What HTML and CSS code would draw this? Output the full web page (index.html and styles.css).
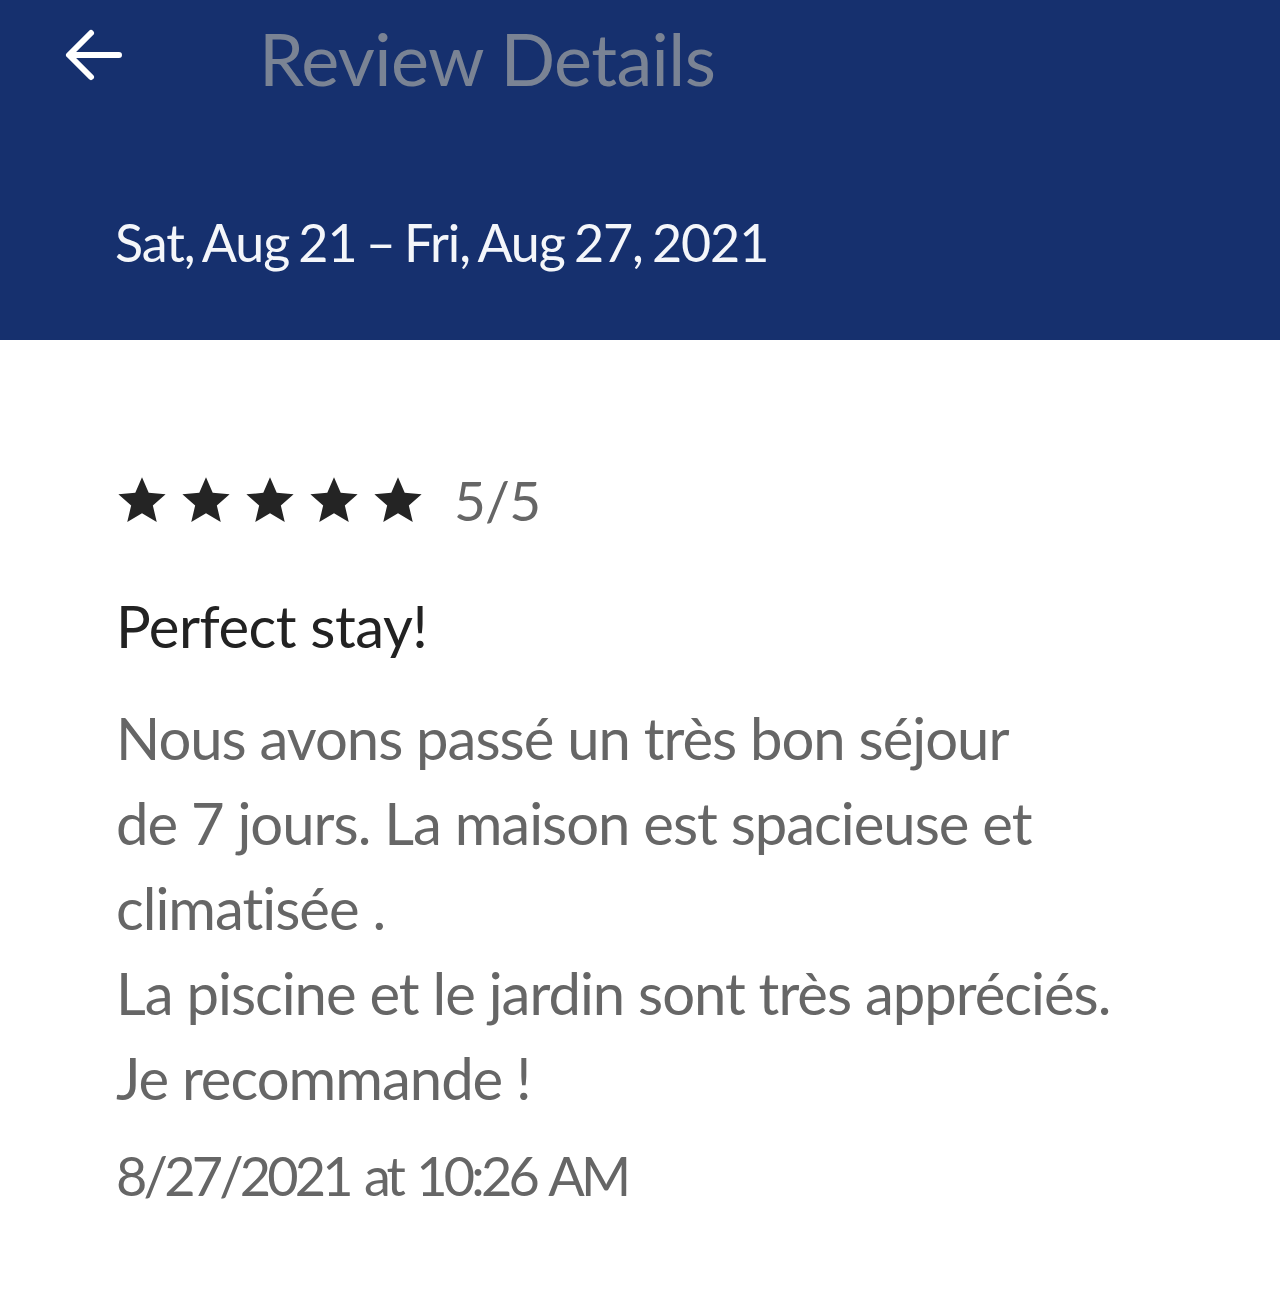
FILE: index.html
```html
<!DOCTYPE html>
<html lang="en">
<head>
<meta charset="utf-8">
<title>Review Details</title>
<link rel="stylesheet" href="styles.css">
</head>
<body>
<header class="header">
  <div class="toolbar">
    <svg class="back" width="60" height="60" viewBox="0 0 60 60" aria-hidden="true">
      <path d="M57 27H8M29 5 7 27l22 22" fill="none" stroke="#fff" stroke-width="6" stroke-linecap="round" stroke-linejoin="round"/>
    </svg>
    <h1 class="title">Review Details</h1>
  </div>
  <div class="dates">Sat, Aug 21 – Fri, Aug 27, 2021</div>
</header>
<main class="review">
  <div class="rating">
    <div class="stars">
      <svg class="star" viewBox="0 0 24 24"><path d="M12 1.5l3.1 7.2 7.8.7-5.9 5.1 1.8 7.6L12 18.1l-6.8 4 1.8-7.6L1.1 9.4l7.8-.7z"/></svg>
      <svg class="star" viewBox="0 0 24 24"><path d="M12 1.5l3.1 7.2 7.8.7-5.9 5.1 1.8 7.6L12 18.1l-6.8 4 1.8-7.6L1.1 9.4l7.8-.7z"/></svg>
      <svg class="star" viewBox="0 0 24 24"><path d="M12 1.5l3.1 7.2 7.8.7-5.9 5.1 1.8 7.6L12 18.1l-6.8 4 1.8-7.6L1.1 9.4l7.8-.7z"/></svg>
      <svg class="star" viewBox="0 0 24 24"><path d="M12 1.5l3.1 7.2 7.8.7-5.9 5.1 1.8 7.6L12 18.1l-6.8 4 1.8-7.6L1.1 9.4l7.8-.7z"/></svg>
      <svg class="star" viewBox="0 0 24 24"><path d="M12 1.5l3.1 7.2 7.8.7-5.9 5.1 1.8 7.6L12 18.1l-6.8 4 1.8-7.6L1.1 9.4l7.8-.7z"/></svg>
    </div>
    <span class="score">5/5</span>
  </div>
  <h2 class="headline">Perfect stay!</h2>
  <p class="body">Nous avons passé un très bon séjour<br>de 7 jours. La maison est spacieuse et<br>climatisée .<br>La piscine et le jardin sont très appréciés.<br>Je recommande !</p>
  <div class="posted">8/27/2021 at 10:26 AM</div>
</main>
</body>
</html>
```
FILE: styles.css
```css
html, body {
  margin: 0;
  padding: 0;
  background: #fff;
  font-family: Lato, "Noto Sans", sans-serif;
}

.header {
  background: #16306e;
  height: 340px;
  box-sizing: border-box;
  padding-top: 26px;
}

.toolbar {
  display: flex;
  align-items: center;
  height: 64px;
}

.back {
  margin-left: 62px;
  width: 60px;
  height: 60px;
}

.title {
  margin: 0 0 0 137px;
  font-size: 72px;
  font-weight: 400;
  color: #7a8394;
  line-height: 64px;
  letter-spacing: -0.6px;
}

.dates {
  margin: 122px 0 0 115px;
  font-size: 52px;
  line-height: 60px;
  color: #f4f6fa;
  letter-spacing: -1.1px;
  word-spacing: -3px;
}

.review {
  padding: 130px 0 0 116px;
}

.rating {
  display: flex;
  align-items: center;
  height: 60px;
}

.stars {
  display: flex;
  gap: 12px;
}

.star {
  width: 52px;
  height: 52px;
  fill: #242424;
}

.score {
  margin-left: 30px;
  font-size: 55px;
  color: #666;
  letter-spacing: -0.8px;
}

.headline {
  margin: 66px 0 0;
  font-size: 58px;
  font-weight: 400;
  color: #222;
  line-height: 60px;
  letter-spacing: -0.5px;
}

.body {
  margin: 39px 0 0;
  font-size: 58px;
  line-height: 85px;
  color: #666;
  letter-spacing: -1px;
}

.posted {
  margin-top: 26px;
  font-size: 54px;
  color: #666;
  line-height: 60px;
  letter-spacing: -3.8px;
  word-spacing: 4px;
}
```
